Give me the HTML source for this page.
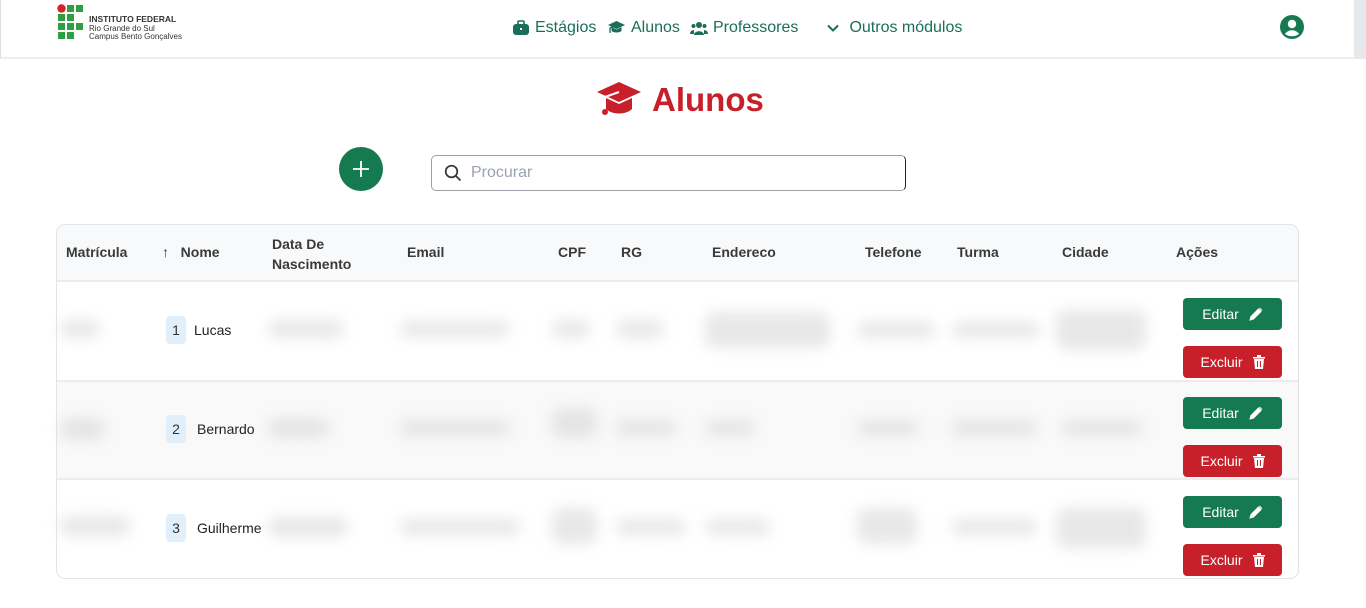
<!DOCTYPE html>
<html><head><meta charset="utf-8"><style>
*{box-sizing:border-box;margin:0;padding:0}
body{width:1366px;height:608px;background:#fff;font-family:"Liberation Sans",sans-serif;position:relative;overflow:hidden;color:#222}
.abs{position:absolute}
.hdr{left:0;top:0;width:1354px;height:59px;border-bottom:2px solid #eeeeee;border-left:1px solid #ddd}
.strip{left:1354px;top:0;width:12px;height:59px;background:#e6e9eb}
.nav{top:19px;font-size:16px;color:#1a6e5a;display:flex;align-items:center;gap:5px}
.th{font-size:14px;font-weight:bold;color:#3a3a3a;top:0}
.blob{position:absolute;background:#d0d0d0;border-radius:10px;filter:blur(7px);opacity:.5}
.btn{position:absolute;left:1183px;width:99px;height:32px;border-radius:4px;color:#fff;font-size:14px;display:flex;align-items:center;justify-content:center;gap:10px}
.ed{background:#157a50}.ex{background:#c8202a}
.num{position:absolute;left:166px;width:20px;height:28px;background:#e1effb;border-radius:4px;font-size:14px;color:#333;display:flex;align-items:center;justify-content:center}
.nm{position:absolute;font-size:14px;color:#222}
</style></head><body>
<div class="abs hdr"></div><div class="abs strip"></div>
<svg class="abs" style="left:57px;top:4px" width="28" height="38" viewBox="0 0 28 38">
<circle cx="4.5" cy="4.5" r="4.2" fill="#d3232a"/>
<rect x="10" y="1" width="7" height="7" fill="#2ea043"/><rect x="19" y="1" width="7" height="7" fill="#2ea043"/>
<rect x="1" y="10" width="7" height="7" fill="#2ea043"/><rect x="10" y="10" width="7" height="7" fill="#2ea043"/>
<rect x="1" y="19" width="7" height="7" fill="#2ea043"/><rect x="10" y="19" width="7" height="7" fill="#2ea043"/><rect x="19" y="19" width="7" height="7" fill="#2ea043"/>
<rect x="1" y="28" width="7" height="7" fill="#2ea043"/><rect x="10" y="28" width="7" height="7" fill="#2ea043"/>
</svg>
<div class="abs" style="left:89px;top:15px;font-size:8px;line-height:8.5px;color:#333"><b style="font-size:8.5px">INSTITUTO FEDERAL</b><br>Rio Grande do Sul<br>Campus Bento Gonçalves</div>
<div class="abs nav" style="left:512px"><svg width="18" height="16" viewBox="0 0 18 16"><rect x="1" y="4" width="16" height="11" rx="3" fill="#1a6e5a"/><rect x="6" y="1" width="6" height="4" rx="1" fill="none" stroke="#1a6e5a" stroke-width="1.6"/><rect x="8" y="8" width="2" height="2" fill="#fff"/></svg>Estágios</div>
<div class="abs nav" style="left:607px"><svg width="19" height="16" viewBox="0 0 19 16"><path d="M9.5 1 18 5 9.5 9 1 5Z" fill="#1a6e5a"/><path d="M4.5 7v4c2 2 8 2 10 0V7l-5 2.5z" fill="#1a6e5a"/><path d="M9.5 5 3 8v5" stroke="#1a6e5a" stroke-width="1.3" fill="none"/></svg>Alunos</div>
<div class="abs nav" style="left:690px"><svg width="18" height="16" viewBox="0 0 18 16"><circle cx="9" cy="5" r="3" fill="#1a6e5a"/><circle cx="3.5" cy="6" r="2" fill="#1a6e5a"/><circle cx="14.5" cy="6" r="2" fill="#1a6e5a"/><path d="M4 15c0-5 10-5 10 0z" fill="#1a6e5a"/><path d="M0 14c0-4 4-4 4-4v4zM18 14c0-4-4-4-4-4v4z" fill="#1a6e5a"/></svg>Professores</div>
<div class="abs nav" style="left:826px"><svg width="14" height="14" viewBox="0 0 14 14"><path d="M2 4.5 7 9.5 12 4.5" stroke="#1a6e5a" stroke-width="2" fill="none"/></svg>&nbsp;Outros módulos</div>
<svg class="abs" style="left:1280px;top:15px" width="24" height="24" viewBox="0 0 24 24"><circle cx="12" cy="12" r="12" fill="#157a50"/><circle cx="12" cy="9" r="4.2" fill="#fff"/><path d="M5 19c3-5 11-5 14 0c-4 3-10 3-14 0z" fill="#fff"/></svg>
<svg class="abs" style="left:596px;top:80px" width="46" height="40" viewBox="0 0 46 40"><path d="M23 2 45 12 23 22 1 12Z" fill="#c8202a"/><path d="M10 18v11c6 6 20 6 26 0V18l-13 6z" fill="#c8202a"/><path d="M23 12 9 17v12" stroke="#fff" stroke-width="2" fill="none"/><circle cx="9" cy="32" r="3" fill="#c8202a"/></svg>
<div class="abs" style="left:652px;top:81px;font-size:33px;font-weight:bold;color:#c8202a">Alunos</div>
<div class="abs" style="left:339px;top:147px;width:44px;height:44px;border-radius:50%;background:#157a50"><svg width="44" height="44" viewBox="0 0 44 44"><path d="M22 14v16M14 22h16" stroke="#fff" stroke-width="1.8"/></svg></div>
<div class="abs" style="left:431px;top:155px;width:475px;height:36px;border:1px solid #9aa0a6;border-right:1.5px solid #222;border-radius:5px"></div>
<svg class="abs" style="left:444px;top:164px" width="18" height="18" viewBox="0 0 18 18"><circle cx="7.5" cy="7.5" r="5.8" stroke="#333" stroke-width="1.7" fill="none"/><path d="M12 12l4.5 4.5" stroke="#333" stroke-width="1.7"/></svg>
<div class="abs" style="left:471px;top:164px;font-size:16px;color:#9aa3ad">Procurar</div>
<div class="abs" style="left:56px;top:224px;width:1243px;height:355px;border:1px solid #e4e4e4;border-radius:9px;overflow:hidden">
 <div class="abs" style="left:0;top:0;width:100%;height:57px;background:#f8f9fa;border-bottom:2px solid #ececec"></div>
 <div class="abs" style="left:0;top:155px;width:100%;height:100px;background:#f9f9f9;border-top:2px solid #ececec;border-bottom:2px solid #ececec"></div>
</div>
<div class="abs th" style="left:66px;top:244px">Matrícula</div>
<div class="abs th" style="left:162px;top:244px">↑&nbsp;&nbsp; Nome</div>
<div class="abs th" style="left:272px;top:234px;line-height:20px">Data De<br>Nascimento</div>
<div class="abs th" style="left:407px;top:244px">Email</div>
<div class="abs th" style="left:558px;top:244px">CPF</div>
<div class="abs th" style="left:621px;top:244px">RG</div>
<div class="abs th" style="left:712px;top:244px">Endereco</div>
<div class="abs th" style="left:865px;top:244px">Telefone</div>
<div class="abs th" style="left:957px;top:244px">Turma</div>
<div class="abs th" style="left:1062px;top:244px">Cidade</div>
<div class="abs th" style="left:1176px;top:244px">Ações</div>
<div class="num" style="top:316px">1</div><div class="nm" style="left:194px;top:322px">Lucas</div>
<div class="num" style="top:415px">2</div><div class="nm" style="left:197px;top:421px">Bernardo</div>
<div class="num" style="top:514px">3</div><div class="nm" style="left:197px;top:520px">Guilherme</div>
<div class="blob" style="left:60px;top:320px;width:40px;height:18px"></div>
<div class="blob" style="left:268px;top:320px;width:76px;height:18px"></div>
<div class="blob" style="left:400px;top:321px;width:110px;height:16px"></div>
<div class="blob" style="left:552px;top:320px;width:38px;height:18px"></div>
<div class="blob" style="left:616px;top:320px;width:48px;height:18px"></div>
<div class="blob" style="left:705px;top:312px;width:125px;height:36px"></div>
<div class="blob" style="left:857px;top:322px;width:78px;height:16px"></div>
<div class="blob" style="left:952px;top:322px;width:88px;height:16px"></div>
<div class="blob" style="left:1056px;top:310px;width:90px;height:40px"></div>
<div class="blob" style="left:60px;top:418px;width:45px;height:22px"></div>
<div class="blob" style="left:268px;top:418px;width:62px;height:20px"></div>
<div class="blob" style="left:400px;top:420px;width:110px;height:16px"></div>
<div class="blob" style="left:552px;top:408px;width:45px;height:30px"></div>
<div class="blob" style="left:616px;top:420px;width:60px;height:16px"></div>
<div class="blob" style="left:705px;top:420px;width:50px;height:16px"></div>
<div class="blob" style="left:857px;top:420px;width:62px;height:16px"></div>
<div class="blob" style="left:952px;top:420px;width:85px;height:16px"></div>
<div class="blob" style="left:1062px;top:420px;width:80px;height:16px"></div>
<div class="blob" style="left:60px;top:516px;width:70px;height:20px"></div>
<div class="blob" style="left:268px;top:517px;width:80px;height:20px"></div>
<div class="blob" style="left:400px;top:519px;width:120px;height:16px"></div>
<div class="blob" style="left:552px;top:508px;width:45px;height:36px"></div>
<div class="blob" style="left:616px;top:519px;width:70px;height:16px"></div>
<div class="blob" style="left:705px;top:519px;width:65px;height:16px"></div>
<div class="blob" style="left:857px;top:508px;width:60px;height:36px"></div>
<div class="blob" style="left:952px;top:519px;width:85px;height:16px"></div>
<div class="blob" style="left:1056px;top:508px;width:90px;height:40px"></div>
<div class="btn ed" style="top:298px">Editar <svg width="14" height="14" viewBox="0 0 14 14"><path d="M1 13l1-3.5 7.5-7.5 2.5 2.5L4.5 12z M10.5 1l2.5 2.5" fill="#fff" stroke="#fff" stroke-width="1"/></svg></div>
<div class="btn ex" style="top:346px">Excluir <svg width="12" height="14" viewBox="0 0 12 14"><path d="M0 2h12v1.5H0zM4 0h4v2H4zM1 4h10l-1 10H2z" fill="#fff"/><path d="M4.5 6v6M7.5 6v6" stroke="#c8202a" stroke-width="1"/></svg></div>
<div class="btn ed" style="top:397px">Editar <svg width="14" height="14" viewBox="0 0 14 14"><path d="M1 13l1-3.5 7.5-7.5 2.5 2.5L4.5 12z M10.5 1l2.5 2.5" fill="#fff" stroke="#fff" stroke-width="1"/></svg></div>
<div class="btn ex" style="top:445px">Excluir <svg width="12" height="14" viewBox="0 0 12 14"><path d="M0 2h12v1.5H0zM4 0h4v2H4zM1 4h10l-1 10H2z" fill="#fff"/><path d="M4.5 6v6M7.5 6v6" stroke="#c8202a" stroke-width="1"/></svg></div>
<div class="btn ed" style="top:496px">Editar <svg width="14" height="14" viewBox="0 0 14 14"><path d="M1 13l1-3.5 7.5-7.5 2.5 2.5L4.5 12z M10.5 1l2.5 2.5" fill="#fff" stroke="#fff" stroke-width="1"/></svg></div>
<div class="btn ex" style="top:544px">Excluir <svg width="12" height="14" viewBox="0 0 12 14"><path d="M0 2h12v1.5H0zM4 0h4v2H4zM1 4h10l-1 10H2z" fill="#fff"/><path d="M4.5 6v6M7.5 6v6" stroke="#c8202a" stroke-width="1"/></svg></div>
</body></html>
